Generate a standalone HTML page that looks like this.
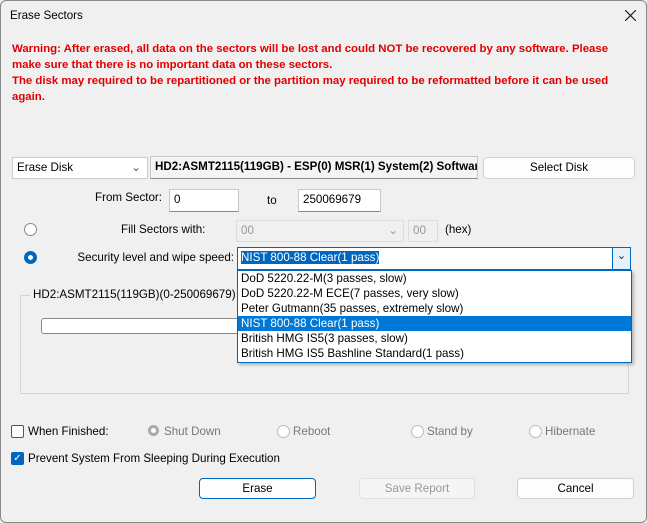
<!DOCTYPE html><html><head><style>
body{margin:0;width:647px;height:523px;background:#f0f0f0;font-family:"Liberation Sans",sans-serif;font-size:11.6px;color:#000;position:relative;overflow:hidden}
.a{position:absolute;white-space:nowrap}
.box{position:absolute;background:#fff;border:1px solid #c8c8c8;border-bottom-color:#8a8a8a;box-sizing:border-box;padding:3px 4px;white-space:nowrap}
.btn{position:absolute;background:#fdfdfd;border:1px solid #d0d0d0;border-radius:4px;box-sizing:border-box;text-align:center;line-height:19px}
.rad{position:absolute;width:11px;height:11px;border:1px solid #888;border-radius:50%;background:#fff}
</style></head><body>
<div style="position:absolute;left:0;top:0;width:645px;height:521px;border:1px solid #888;border-radius:6px"></div>
<div class="a" style="left:10px;top:9px">Erase Sectors</div>
<svg class="a" style="left:625px;top:10px" width="11" height="11"><path d="M0 0L11 11M11 0L0 11" stroke="#222" stroke-width="1.2"/></svg>
<div class="a" style="left:12px;top:41px;color:#e00000;font-weight:bold;font-size:11.4px;line-height:16px">Warning: After erased, all data on the sectors will be lost and could NOT be recovered by any software. Please<br>make sure that there is no important data on these sectors.<br>The disk may required to be repartitioned or the partition may required to be reformatted before it can be used<br>again.</div>
<div class="box" style="left:12px;top:157px;width:136px;height:22px;border-color:#ccc">Erase Disk<span style="position:absolute;right:6px;top:2px;color:#555">⌄</span></div>
<div class="box" style="left:150px;top:156px;width:328px;height:23px;font-weight:bold;overflow:hidden;background:#f4f4f4">HD2:ASMT2115(119GB) - ESP(0) MSR(1) System(2) Software</div>
<div class="btn" style="left:483px;top:157px;width:152px;height:22px">Select Disk</div>
<div class="a" style="left:95px;top:191px">From Sector:</div>
<div class="box" style="left:169px;top:189px;width:70px;height:23px">0</div>
<div class="a" style="left:267px;top:194px">to</div>
<div class="box" style="left:298px;top:189px;width:83px;height:23px">250069679</div>
<div class="rad" style="left:24px;top:223px"></div>
<div class="a" style="left:121px;top:223px">Fill Sectors with:</div>
<div class="box" style="left:236px;top:220px;width:168px;height:22px;background:#f0f0f0;border-color:#ddd;color:#999">00<span style="position:absolute;right:5px;top:2px">⌄</span></div>
<div class="box" style="left:408px;top:220px;width:30px;height:22px;background:#f0f0f0;border-color:#ddd;color:#999">00</div>
<div class="a" style="left:445px;top:223px">(hex)</div>
<div class="rad" style="left:24px;top:251px;border:4px solid #0067c0;width:5px;height:5px"></div>
<div class="a" style="right:413px;top:251px">Security level and wipe speed:</div>
<div class="box" style="left:237px;top:247px;width:394px;height:23px;border-color:#0067c0;padding:3px 3px"><span style="background:#0067c0;color:#fff">NIST 800-88 Clear(1 pass)</span><span style="position:absolute;right:0;top:0;width:17px;height:21px;background:#e5f1fb;border-left:1px solid #0067c0;text-align:center;color:#333">⌄</span></div>
<div style="position:absolute;left:20px;top:295px;width:607px;height:97px;border:1px solid #d5d5d5"></div>
<div class="a" style="left:30px;top:288px;background:#f0f0f0;padding:0 3px">HD2:ASMT2115(119GB)(0-250069679)</div>
<div style="position:absolute;left:41px;top:318px;width:220px;height:14px;border:1px solid #888;border-radius:3px;background:#fff"></div>
<div style="position:absolute;left:237px;top:270px;width:393px;height:91px;background:#fff;border:1px solid #0067c0;box-shadow:2px 2px 3px rgba(0,0,0,.25);line-height:15px">
<div style="padding-left:3px">DoD 5220.22-M(3 passes, slow)</div>
<div style="padding-left:3px">DoD 5220.22-M ECE(7 passes, very slow)</div>
<div style="padding-left:3px">Peter Gutmann(35 passes, extremely slow)</div>
<div style="padding-left:3px;background:#0078d7;color:#fff">NIST 800-88 Clear(1 pass)</div>
<div style="padding-left:3px">British HMG IS5(3 passes, slow)</div>
<div style="padding-left:3px">British HMG IS5 Bashline Standard(1 pass)</div>
</div>
<div style="position:absolute;left:11px;top:425px;width:11px;height:11px;border:1px solid #555;border-radius:2px;background:#fff"></div>
<div class="a" style="left:28px;top:425px">When Finished:</div>
<div class="rad" style="left:148px;top:425px;border:3px solid #aaa;width:5px;height:5px;background:#fff"></div>
<div class="a" style="left:164px;top:425px;color:#777">Shut Down</div>
<div class="rad" style="left:277px;top:425px;border-color:#bbb"></div>
<div class="a" style="left:293px;top:425px;color:#777">Reboot</div>
<div class="rad" style="left:411px;top:425px;border-color:#bbb"></div>
<div class="a" style="left:427px;top:425px;color:#777">Stand by</div>
<div class="rad" style="left:529px;top:425px;border-color:#bbb"></div>
<div class="a" style="left:545px;top:425px;color:#777">Hibernate</div>
<div style="position:absolute;left:11px;top:452px;width:13px;height:13px;border-radius:2px;background:#0067c0;color:#fff;font-size:10px;text-align:center;line-height:13px">✓</div>
<div class="a" style="left:28px;top:452px">Prevent System From Sleeping During Execution</div>
<div class="btn" style="left:199px;top:478px;width:117px;height:21px;border:1px solid #0067c0">Erase</div>
<div class="btn" style="left:359px;top:478px;width:116px;height:21px;color:#999;background:#f5f5f5;border-color:#e0e0e0">Save Report</div>
<div class="btn" style="left:517px;top:478px;width:117px;height:21px">Cancel</div>
</body></html>
